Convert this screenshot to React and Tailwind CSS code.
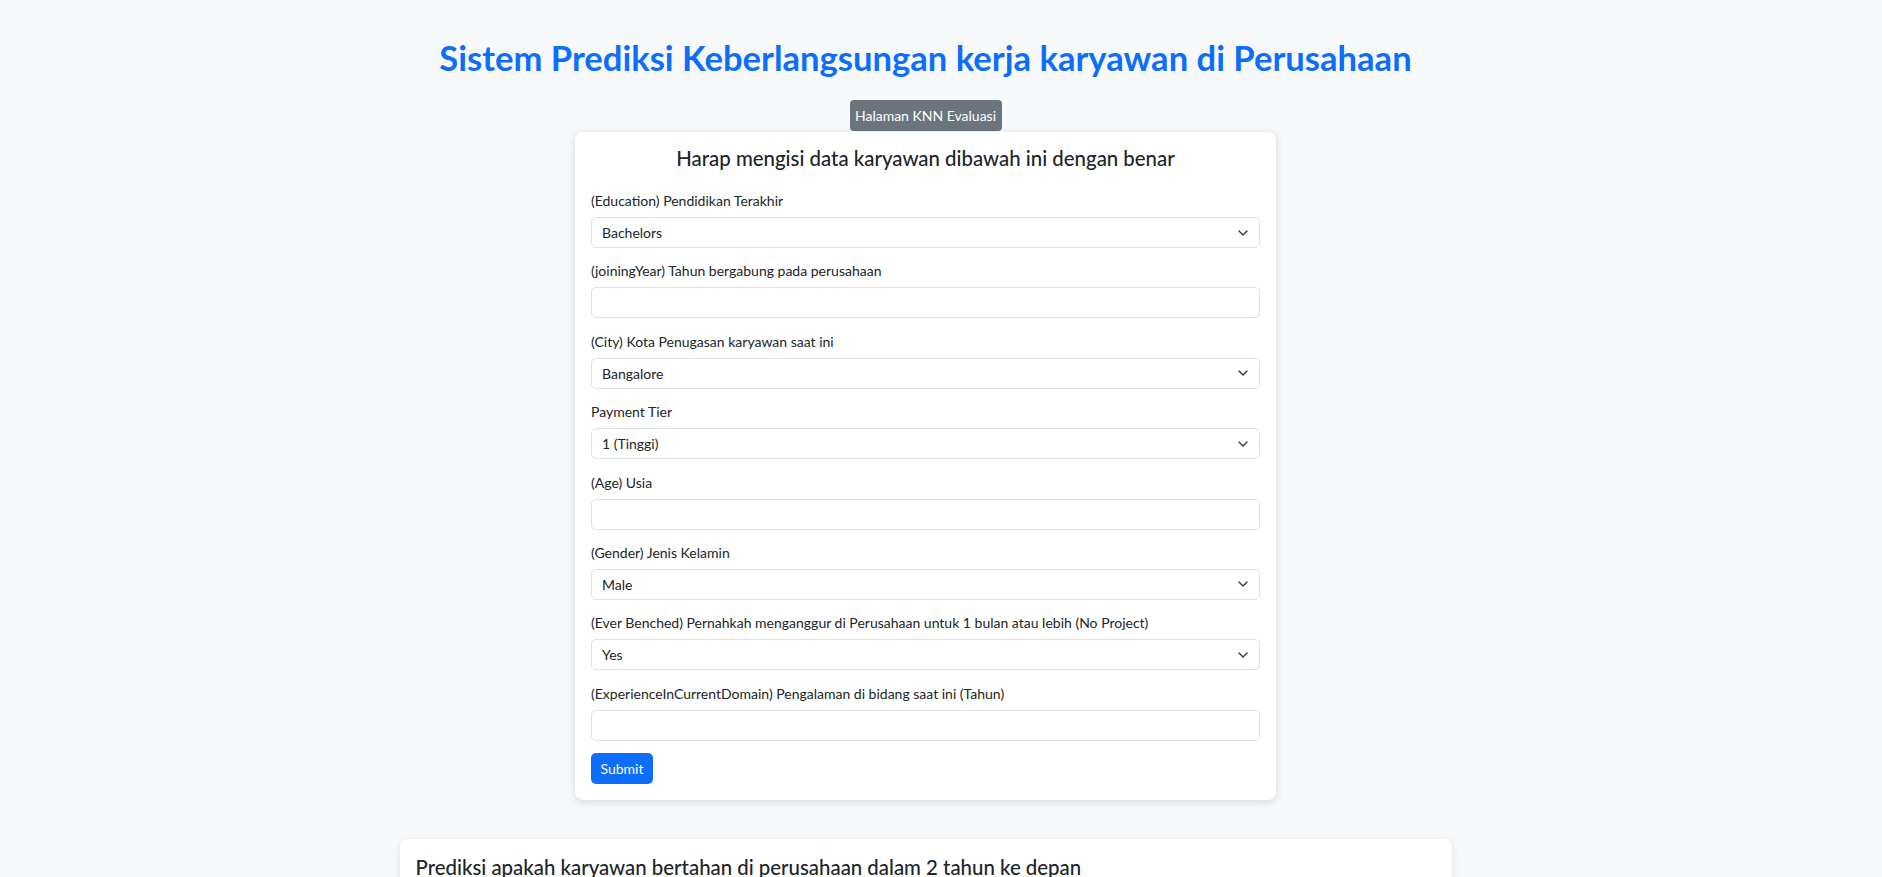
import { useState } from "react";

const fields = [
  {
    name: "education",
    label: "(Education) Pendidikan Terakhir",
    type: "select",
    options: ["Bachelors", "Masters", "PHD"],
  },
  {
    name: "joiningYear",
    label: "(joiningYear) Tahun bergabung pada perusahaan",
    type: "number",
  },
  {
    name: "city",
    label: "(City) Kota Penugasan karyawan saat ini",
    type: "select",
    options: ["Bangalore", "Pune", "New Delhi"],
  },
  {
    name: "paymentTier",
    label: "Payment Tier",
    type: "select",
    options: ["1 (Tinggi)", "2 (Menengah)", "3 (Rendah)"],
  },
  { name: "age", label: "(Age) Usia", type: "number" },
  {
    name: "gender",
    label: "(Gender) Jenis Kelamin",
    type: "select",
    options: ["Male", "Female"],
  },
  {
    name: "everBenched",
    label:
      "(Ever Benched) Pernahkah menganggur di Perusahaan untuk 1 bulan atau lebih (No Project)",
    type: "select",
    options: ["Yes", "No"],
  },
  {
    name: "experience",
    label: "(ExperienceInCurrentDomain) Pengalaman di bidang saat ini (Tahun)",
    type: "number",
  },
];

function Chevron() {
  return (
    <svg
      className="pointer-events-none absolute right-[12px] top-1/2 -translate-y-1/2"
      width="10"
      height="7"
      viewBox="0 0 10 7"
      fill="none"
    >
      <path
        d="M1 1.5l4 4 4-4"
        stroke="#343a40"
        strokeWidth="1.4"
        strokeLinecap="round"
        strokeLinejoin="round"
      />
    </svg>
  );
}

export default function App() {
  const [formData, setFormData] = useState({
    education: "Bachelors",
    joiningYear: "",
    city: "Bangalore",
    paymentTier: "1 (Tinggi)",
    age: "",
    gender: "Male",
    everBenched: "Yes",
    experience: "",
  });

  const handleChange = (e) => {
    const { name, value } = e.target;
    setFormData((prev) => ({ ...prev, [name]: value }));
  };

  const controlClass =
    "block w-full h-[31px] rounded-[5px] border border-[#dee2e6] bg-white px-[10px] text-[14px] text-[#212529] outline-none focus:border-[#86b7fe]";

  return (
    <div
      className="min-h-screen bg-[#f8f9fa] pr-[31px] pb-[120px] text-[#212529]"
      style={{ fontFamily: "Lato, 'Noto Sans', sans-serif" }}
    >
      <div className="flex flex-col items-center pt-[38px]">
        {/* Title */}
        <h1 className="text-[34.6px] font-bold leading-[40px] text-[#0d6efd]">
          Sistem Prediksi Keberlangsungan kerja karyawan di Perusahaan
        </h1>

        <button className="mt-[22px] h-[31px] w-[152px] rounded-[4px] bg-[#6c757d] text-[14px] text-white">
          Halaman KNN Evaluasi
        </button>

        {/* Form card */}
        <div className="mt-[1px] w-[701px] rounded-[8px] bg-white px-[16px] pt-[14px] pb-[16px] shadow-[0_2px_8px_rgba(0,0,0,0.15)]">
          <h4 className="mb-[20px] text-center text-[20.4px] font-medium leading-[24px]">
            Harap mengisi data karyawan dibawah ini dengan benar
          </h4>
          <form onSubmit={(e) => e.preventDefault()}>
            {fields.map((f) => (
              <div key={f.name} className="mb-[12.4px]">
                <label
                  htmlFor={f.name}
                  className="mb-[6px] block text-[14px] leading-[21px]"
                >
                  {f.label}
                </label>
                {f.type === "select" ? (
                  <div className="relative">
                    <select
                      id={f.name}
                      name={f.name}
                      value={formData[f.name]}
                      onChange={handleChange}
                      className={controlClass + " appearance-none"}
                    >
                      {f.options.map((o) => (
                        <option key={o}>{o}</option>
                      ))}
                    </select>
                    <Chevron />
                  </div>
                ) : (
                  <input
                    type="number"
                    id={f.name}
                    name={f.name}
                    value={formData[f.name]}
                    onChange={handleChange}
                    className={controlClass}
                  />
                )}
              </div>
            ))}
            <button
              type="submit"
              className="h-[31px] w-[62px] rounded-[5px] bg-[#0d6efd] text-[14px] text-white"
            >
              Submit
            </button>
          </form>
        </div>

        {/* Result card */}
        <div className="mt-[39px] w-[1052px] rounded-[8px] bg-white px-[16px] pt-[16px] pb-[60px] shadow-[0_2px_8px_rgba(0,0,0,0.1)]">
          <h5 className="text-[20.4px] font-medium leading-[24px]">
            Prediksi apakah karyawan bertahan di perusahaan dalam 2 tahun ke depan
          </h5>
        </div>
      </div>
    </div>
  );
}
